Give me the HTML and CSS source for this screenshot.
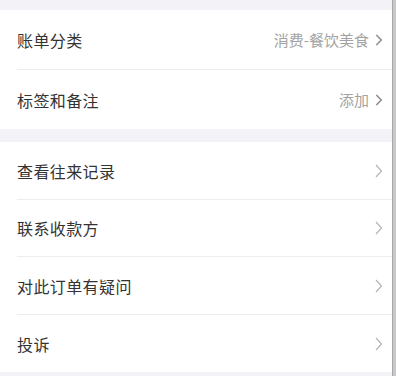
FILE: index.html
```html
<!DOCTYPE html>
<html lang="zh">
<head>
<meta charset="utf-8">
<link rel="stylesheet" href="styles.css">
</head>
<body>
<div class="page">
  <div class="main">
    <div class="card card-top">
      <div class="row r60">
        <span class="label">账单分类</span>
        <span class="right"><span class="value">消费-餐饮美食</span><svg class="chev" width="8" height="12" viewBox="0 0 8 12"><path d="M1.3 1 L6.3 6 L1.3 11" fill="none" stroke="#8c8c8c" stroke-width="1.5"/></svg></span>
      </div>
      <div class="row r58">
        <span class="label">标签和备注</span>
        <span class="right"><span class="value">添加</span><svg class="chev" width="8" height="12" viewBox="0 0 8 12"><path d="M1.3 1 L6.3 6 L1.3 11" fill="none" stroke="#8c8c8c" stroke-width="1.5"/></svg></span>
      </div>
    </div>
    <div class="card card-bottom">
      <div class="row r57">
        <span class="label">查看往来记录</span>
        <span class="right"><svg class="chev" width="8" height="14" viewBox="0 0 8 14"><path d="M1 1 L6.5 7 L1 13" fill="none" stroke="#b4b4b4" stroke-width="1.2"/></svg></span>
      </div>
      <div class="row r56">
        <span class="label">联系收款方</span>
        <span class="right"><svg class="chev" width="8" height="14" viewBox="0 0 8 14"><path d="M1 1 L6.5 7 L1 13" fill="none" stroke="#b4b4b4" stroke-width="1.2"/></svg></span>
      </div>
      <div class="row r57">
        <span class="label">对此订单有疑问</span>
        <span class="right"><svg class="chev" width="8" height="14" viewBox="0 0 8 14"><path d="M1 1 L6.5 7 L1 13" fill="none" stroke="#b4b4b4" stroke-width="1.2"/></svg></span>
      </div>
      <div class="row r57">
        <span class="label">投诉</span>
        <span class="right"><svg class="chev" width="8" height="14" viewBox="0 0 8 14"><path d="M1 1 L6.5 7 L1 13" fill="none" stroke="#b4b4b4" stroke-width="1.2"/></svg></span>
      </div>
    </div>
  </div>
  <div class="scroll"></div>
</div>
</body>
</html>
```
FILE: styles.css
```css
html, body {
  margin: 0;
  padding: 0;
}
body {
  width: 396px;
  height: 376px;
  overflow: hidden;
  background: #f3f2f7;
  font-family: "Noto Sans CJK SC", "Noto Sans", sans-serif;
}
.page {
  display: flex;
  height: 376px;
}
.main {
  width: 392px;
  padding-top: 10px;
}
.scroll {
  width: 4px;
  height: 376px;
  background: #c8c8c8;
  border-left: 1px solid #a9a9a9;
  box-sizing: border-box;
}
.card {
  background: #fff;
}
.card-top {
  margin-bottom: 13px;
}
.row {
  display: flex;
  align-items: center;
  justify-content: space-between;
  margin-left: 17px;
  padding-right: 9px;
  border-bottom: 1px solid #ededed;
  box-sizing: border-box;
}
.row:last-child {
  border-bottom: none;
}
.r60 { height: 60px; }
.r58 { height: 59px; }
.r57 { height: 58px; }
.r56 { height: 57px; }
.card-bottom .row:last-child { height: 57px; }
.label {
  font-size: 16px;
  color: #333;
  letter-spacing: 0.4px;
}
.right {
  display: flex;
  align-items: center;
}
.value {
  font-size: 15px;
  color: #a3a3a3;
  margin-right: 6px;
}
.chev {
  display: block;
}
```
